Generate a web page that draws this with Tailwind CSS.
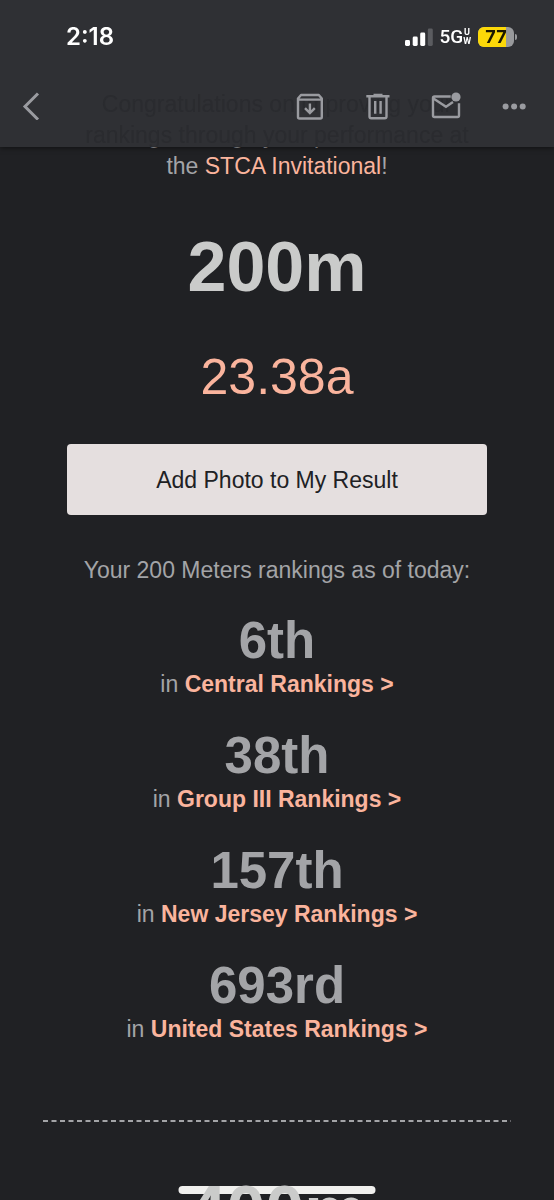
<!DOCTYPE html>
<html lang="en">
<head>
    <meta charset="UTF-8">
    <meta name="viewport" content="width=device-width, initial-scale=1.0">
    <title>200m Rankings</title>
    <script src="https://cdn.jsdelivr.net/npm/@tailwindcss/browser@4"></script>
</head>
<body class="bg-[#202124] text-[#a3a4a7] font-['Liberation_Sans',Arial,sans-serif] h-screen overflow-hidden">

    <!-- status bar + mail toolbar -->
    <header class="fixed top-0 inset-x-0 z-10 h-[147px] bg-[#2f3034] shadow-[0_1px_5px_rgba(0,0,0,0.5)] overflow-hidden">
      <p aria-hidden="true" class="absolute inset-x-0 top-[89px] text-center text-[23px] leading-[31px] text-[#2a2b2f]">Congratulations on improving your<br>rankings through your performance at</p>
      <div class="relative flex items-center justify-between h-[74px] pl-[66px] pr-[37px] text-white">
        <span class="font-[Inter,sans-serif] font-semibold text-[24px] leading-7">2:18</span>
        <div class="flex items-center">
          <svg class="w-7 h-[18px]" viewBox="0 0 28 18" fill="#fff">
            <rect x="0" y="12" width="5" height="6" rx="1.4"/>
            <rect x="7.7" y="8.5" width="5" height="9.5" rx="1.4"/>
            <rect x="15.2" y="4.5" width="5" height="13.5" rx="1.4"/>
            <rect x="22.8" y="0.5" width="5" height="17.5" rx="1.4" fill="#5b5c60"/>
          </svg>
          <span class="ml-[6px] font-[Roboto,sans-serif] font-medium text-[19px] leading-6">5G</span>
          <span class="flex flex-col font-[Roboto,sans-serif] font-bold text-[9px] leading-[9px] text-center"><span>U</span><span>W</span></span>
          <div class="relative ml-[7px] w-9 h-5 rounded-[6px] overflow-hidden bg-[#98999c]">
            <div class="h-full bg-[#fcd808]" style="width:77%"></div>
            <span class="absolute inset-0 text-center font-[Inter,sans-serif] font-bold text-[18px] leading-5 text-[#1a1600]">77</span>
          </div>
          <div class="ml-px w-[2px] h-[6px] rounded-r-full bg-[#98999c]"></div>
        </div>
      </div>
      <div class="relative flex items-center justify-between h-16 pl-[17px] pr-[26px] text-[#9a9ba0]">
        <button aria-label="Back">
          <svg class="w-7 h-7" viewBox="0 0 28 28" fill="none" stroke="currentColor" stroke-width="3"><path d="M21 1.5 8 14.5 21 27.5"/></svg>
        </button>
        <div class="flex gap-10">
          <button aria-label="Archive">
            <svg class="w-7 h-7 overflow-visible" viewBox="0 0 28 28" fill="none" stroke="currentColor" stroke-width="2.4" stroke-linejoin="round">
              <path d="M2 6.5 5 3H22.8L25.8 6.5V25Q25.8 26.5 24.3 26.5H3.5Q2 26.5 2 25ZM2 7.6H25.8"/>
              <path d="M13.9 11.5V20.8M9 16.2 13.9 21.1 18.8 16.2" stroke-linejoin="miter"/>
            </svg>
          </button>
          <button aria-label="Delete">
            <svg class="w-7 h-7 overflow-visible" viewBox="0 0 28 28" fill="none" stroke="currentColor" stroke-width="2.4">
              <path d="M2.3 4.2H25.5M9.5 3H18.5M5.5 4.2V24.5Q5.5 26.3 7.3 26.3H20.7Q22.5 26.3 22.5 24.5V4.2M11.2 9V21.8M16.6 9V21.8"/>
            </svg>
          </button>
          <button aria-label="Mark as unread">
            <svg class="w-7 h-7 overflow-visible" viewBox="0 0 28 28" fill="none" stroke="currentColor" stroke-width="2.4">
              <path d="M18.7 4.5H2.5Q1 4.5 1 6V23.5Q1 25 2.5 25H25.5Q27 25 27 23.5V11.3M1.5 6.5 14 14.8 21 10"/>
              <circle cx="24" cy="5" r="4.6" fill="currentColor" stroke="none"/>
            </svg>
          </button>
          <button aria-label="More">
            <svg class="w-7 h-7" viewBox="0 0 28 28" fill="currentColor">
              <circle cx="5.6" cy="14.5" r="3"/><circle cx="14.1" cy="14.5" r="3"/><circle cx="22.7" cy="14.5" r="3"/>
            </svg>
          </button>
        </div>
      </div>
    </header>

    <main class="pt-[89px] px-[43px] text-center text-[23px]">
      <p class="leading-[31px]">Congratulations on improving your<br>rankings through your performance at<br>the <a href="#" class="text-[#fab49d]">STCA Invitational</a>!</p>

      <h1 class="relative z-10 mt-[44px] font-bold text-[70px] leading-[82px] text-[#cacbca]">200m</h1>
      <p class="mt-[41px] text-[50px] leading-[56px] text-[#fab49d]">23.38a</p>
      <button class="mt-[39px] w-[calc(100%-48px)] h-[71px] pt-[2px] rounded-[4px] bg-[#e5dfdf] text-[#202124]">Add Photo to My Result</button>

      <p class="mt-[40px] leading-[30px]">Your 200 Meters rankings as of today:</p>
      <ul class="mt-[27px] flex flex-col gap-[28px]">
        <li>
          <p class="font-bold text-[51px] leading-[57px]">6th</p>
          <p class="leading-[30px]">in <a href="#" class="font-bold text-[#fab49d]">Central Rankings &gt;</a></p>
        </li>
        <li>
          <p class="font-bold text-[51px] leading-[57px]">38th</p>
          <p class="leading-[30px]">in <a href="#" class="font-bold text-[#fab49d]">Group III Rankings &gt;</a></p>
        </li>
        <li>
          <p class="font-bold text-[51px] leading-[57px]">157th</p>
          <p class="leading-[30px]">in <a href="#" class="font-bold text-[#fab49d]">New Jersey Rankings &gt;</a></p>
        </li>
        <li>
          <p class="font-bold text-[51px] leading-[57px]">693rd</p>
          <p class="leading-[30px]">in <a href="#" class="font-bold text-[#fab49d]">United States Rankings &gt;</a></p>
        </li>
      </ul>

      <svg class="mt-[76px] w-full h-[2px]" stroke="#a3a4a7" stroke-width="2"><line x1="0" y1="1" x2="100%" y2="1" stroke-dasharray="5 3.5"/></svg>
      <h2 class="relative z-10 mt-[48px] font-bold text-[70px] leading-[82px] text-[#cacbca]">400m</h2>
    </main>

    <!-- home indicator -->
    <div class="fixed bottom-[6px] left-1/2 -translate-x-1/2 w-[197px] h-2 rounded-full bg-[#f0f0ee]"></div>
</body>
</html>
